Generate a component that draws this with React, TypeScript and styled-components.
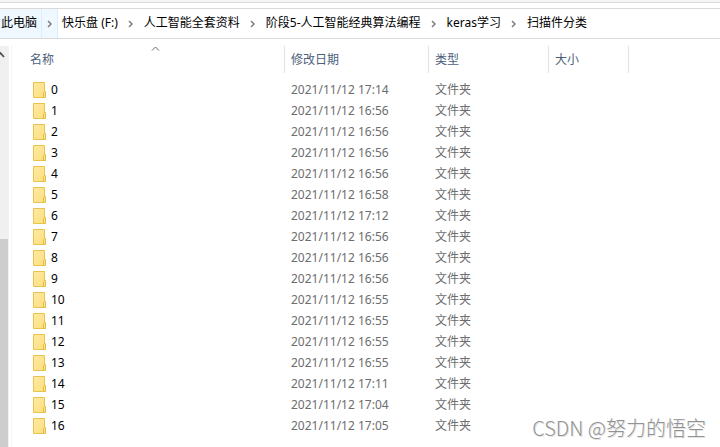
import React from "react";
import styled, { createGlobalStyle } from "styled-components";

const GlobalStyle = createGlobalStyle`
  *, *::before, *::after { box-sizing: border-box; }
  body {
    margin: 0;
    background: #fff;
    color: #000;
    font: 12px/20px "Noto Sans", "Noto Sans CJK SC", sans-serif;
  }
`;

const Window = styled.div`
  position: relative;
  display: flex;
  flex-direction: column;
  min-height: 100vh;
  overflow: hidden;
`;

const RibbonEdge = styled.div`
  height: 3px;
  background: #f4f6f8;
  border-bottom: 1px solid #d9dbdd;
`;

const AddressBar = styled.nav`
  display: flex;
  height: 31px;
  margin-top: 5px;
  border: solid #d9d9d9;
  border-width: 1px 0;
`;

const Crumbs = styled.ol`
  display: flex;
  margin: 0;
  padding: 0;
  list-style: none;
  white-space: nowrap;
`;

const Crumb = styled.li<{ $hot?: boolean }>`
  display: flex;
  margin-right: 4px;
  background: ${(p) => (p.$hot ? "#f0f8ff" : "transparent")};
`;

const CrumbLink = styled.a<{ $hot?: boolean }>`
  display: flex;
  align-items: center;
  padding: 0 4px 2px ${(p) => (p.$hot ? 1 : 0)}px;
  border-right: 1px solid ${(p) => (p.$hot ? "#dceefb" : "transparent")};
  color: #000;
  text-decoration: none;
`;

const CrumbArrow = styled.button<{ $hot?: boolean }>`
  display: flex;
  align-items: center;
  justify-content: center;
  width: ${(p) => (p.$hot ? 16 : 17)}px;
  padding: 0;
  border: 0;
  border-right: 1px solid ${(p) => (p.$hot ? "#dceefb" : "transparent")};
  background: none;
`;

const Body = styled.main`
  display: flex;
  flex: 1;
  padding-top: 7px;
`;

const ScrollTrack = styled.div`
  display: flex;
  flex-direction: column;
  width: 9px;
  background: #f0f0f0;
`;

const ScrollUp = styled.button`
  display: flex;
  height: 17px;
  padding: 5px 0 0;
  border: 0;
  background: none;
`;

const ScrollThumb = styled.div`
  flex: 1;
  width: 8px;
  margin-top: 176px;
  background: #cdcdcd;
`;

const ListPane = styled.section`
  flex: 1;
  margin-left: 2px;
  border-left: 1px solid #f3f3f3;
`;

const FileTable = styled.table`
  width: 100%;
  border-collapse: separate;
  border-spacing: 0;
  table-layout: fixed;
`;

const NameCol = styled.col`
  width: 273px;
`;
const DateCol = styled.col`
  width: 144px;
`;
const TypeCol = styled.col`
  width: 120px;
`;
const SizeCol = styled.col`
  width: 80px;
`;

const HeadCell = styled.th<{ $first?: boolean }>`
  position: relative;
  height: 27px;
  padding: 0 6px 0 ${(p) => (p.$first ? 18 : 6)}px;
  border-right: 1px solid #e2e2e2;
  color: #4c607a;
  font-weight: 400;
  text-align: left;

  &:last-child {
    border: 0;
  }
`;

const SortMark = styled.svg`
  position: absolute;
  top: 0;
  left: 51%;
`;

const Rows = styled.tbody`
  &::before {
    content: "";
    display: table-row;
    height: 6px;
  }
`;

const Cell = styled.td`
  height: 21px;
  padding: 0 6px;
  color: #6d6d6d;
`;

const NameCell = styled(Cell)`
  padding-left: 21px;
  color: #000;
`;

const FileName = styled.span`
  display: flex;
  align-items: center;
  gap: 5px;
`;

const Watermark = styled.div`
  position: absolute;
  right: 14px;
  bottom: 4px;
  color: #929292;
  font: 300 20px/30px "Noto Sans CJK SC", sans-serif;
  text-shadow: 1px 1px 0 #e4e4e4;
`;

const ChevronIcon = () => (
  <svg width="5" height="8" viewBox="0 0 5 8" aria-hidden="true">
    <path d="M1 1 4 4 1 7" fill="none" stroke="#767676" strokeWidth="1.4" />
  </svg>
);

const FolderIcon = () => (
  <svg width="13" height="16" viewBox="0 0 13 16" aria-hidden="true">
    <defs>
      <linearGradient id="folder" x1="0" y1="0" x2="1" y2="1">
        <stop offset="0" stopColor="#ffe9a2" />
        <stop offset="1" stopColor="#fddf80" />
      </linearGradient>
    </defs>
    <path d="M.5.5h11v15H.5z" fill="url(#folder)" stroke="#e9c34b" />
    <path d="M10.5 15.5v-5l1-1h1v6z" fill="#ffe48f" stroke="#e3bc42" />
  </svg>
);

const crumbs = [
  "此电脑",
  "快乐盘 (F:)",
  "人工智能全套资料",
  "阶段5-人工智能经典算法编程",
  "keras学习",
  "扫描件分类",
];

const times = [
  "17:14", "16:56", "16:56", "16:56", "16:56", "16:58", "17:12", "16:56", "16:56",
  "16:56", "16:55", "16:55", "16:55", "16:55", "17:11", "17:04", "17:05",
];

export default function App() {
  return (
    <>
      <GlobalStyle />
      <Window>
        <RibbonEdge />
        <AddressBar aria-label="地址">
          <Crumbs>
            {crumbs.map((name, i) => (
              <Crumb key={name} $hot={i === 0}>
                <CrumbLink href="#" $hot={i === 0}>{name}</CrumbLink>
                {i < crumbs.length - 1 && (
                  <CrumbArrow $hot={i === 0} aria-label={`展开 ${name}`}>
                    <ChevronIcon />
                  </CrumbArrow>
                )}
              </Crumb>
            ))}
          </Crumbs>
        </AddressBar>
        <Body>
          <ScrollTrack>
            <ScrollUp aria-label="向上滚动">
              <svg width="5" height="8" viewBox="0 0 5 8" aria-hidden="true">
                <path d="M-3 6 .5 2 4 6" fill="none" stroke="#505050" strokeWidth="1.8" />
              </svg>
            </ScrollUp>
            <ScrollThumb />
          </ScrollTrack>
          <ListPane>
            <FileTable>
              <colgroup>
                <NameCol />
                <DateCol />
                <TypeCol />
                <SizeCol />
                <col />
              </colgroup>
              <thead>
                <tr>
                  <HeadCell scope="col" $first>
                    名称
                    <SortMark width="9" height="5" viewBox="0 0 9 5" aria-hidden="true">
                      <path d="M1 4.5 4.5 1 8 4.5" fill="none" stroke="#6b6b6b" />
                    </SortMark>
                  </HeadCell>
                  <HeadCell scope="col">修改日期</HeadCell>
                  <HeadCell scope="col">类型</HeadCell>
                  <HeadCell scope="col">大小</HeadCell>
                  <HeadCell as="td" />
                </tr>
              </thead>
              <Rows>
                {times.map((time, i) => (
                  <tr key={i}>
                    <NameCell>
                      <FileName>
                        <FolderIcon />
                        {i}
                      </FileName>
                    </NameCell>
                    <Cell>2021/11/12 {time}</Cell>
                    <Cell>文件夹</Cell>
                    <Cell />
                    <Cell />
                  </tr>
                ))}
              </Rows>
            </FileTable>
          </ListPane>
        </Body>
        <Watermark>CSDN @努力的悟空</Watermark>
      </Window>
    </>
  );
}
